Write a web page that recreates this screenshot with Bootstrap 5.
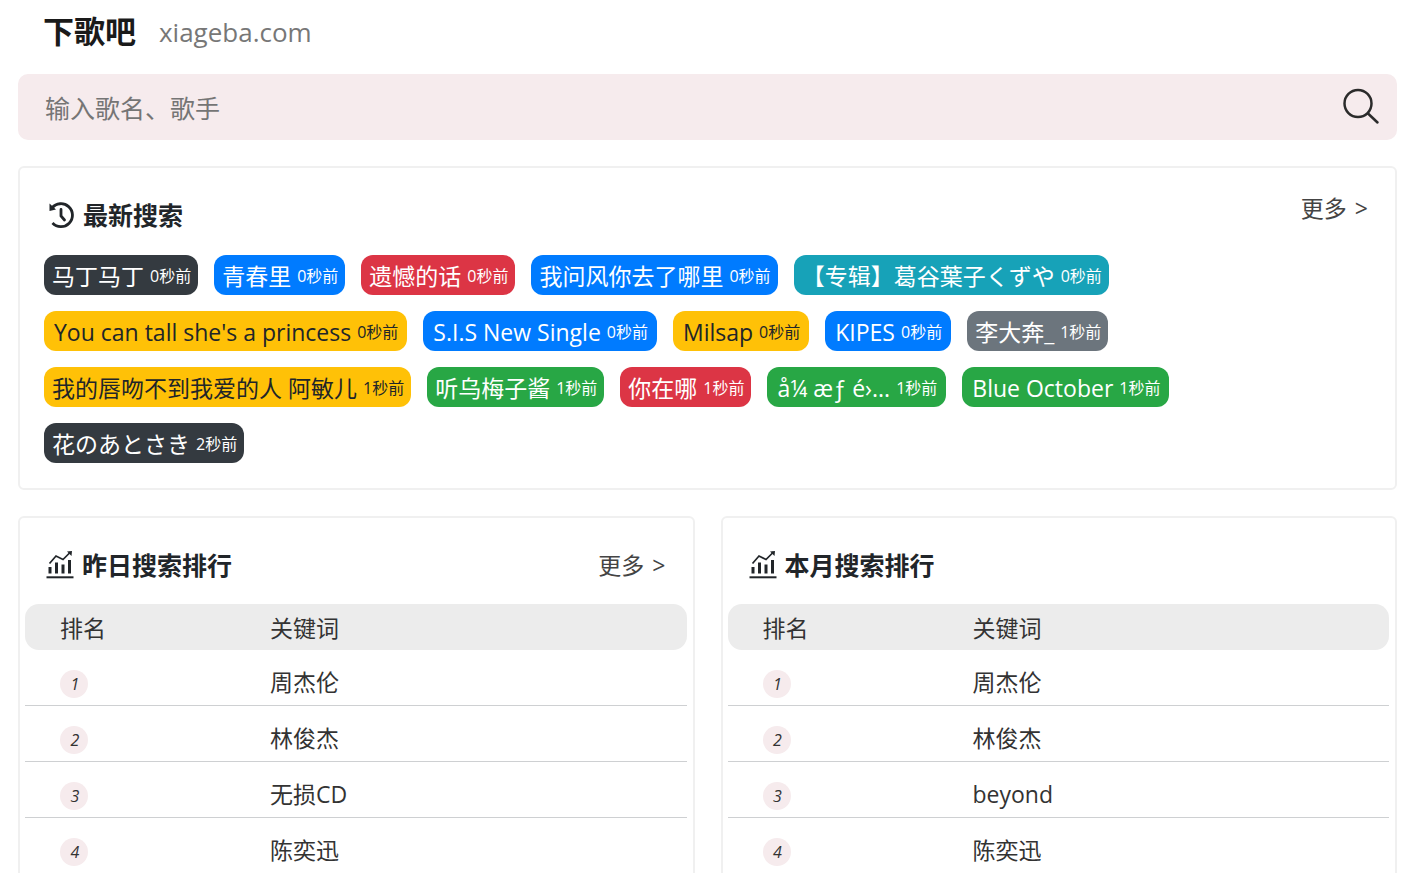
<!DOCTYPE html>
<html lang="zh-CN">
<head>
<meta charset="utf-8">
<meta name="viewport" content="width=device-width, initial-scale=1">
<title>下歌吧</title>
<link href="https://cdn.jsdelivr.net/npm/bootstrap@5.3.0/dist/css/bootstrap.min.css" rel="stylesheet">
<style>
body { font-family: "Open Sans", "Noto Sans CJK SC", sans-serif; color: #212529; background: #fff; }
.page { padding: 0 14px 0 18px; }
.brand-row { height: 74px; padding: 0 25px 12px; gap: 23px; }
.brand-name { font-size: 31px; line-height: 40px; color: #1a1a1a; }
.brand-domain { font-size: 26px; line-height: 40px; padding-top: 2px; color: #777; }
.search-box { background: #f6ebed; border-radius: 10px; height: 66px; margin-bottom: 26px; padding: 0 17px 0 27px; }
.search-box input { font-size: 25px; line-height: 40px; padding: 2px 0 0; color: #333; }
.search-box input::placeholder { color: #757575; opacity: 1; }
.panel { border: 2px solid #f0f0f0; border-radius: 6px; }
.recent { padding: 23px 24px 25px; margin-bottom: 26px; }
.panel-title { font-size: 25px; line-height: 48px; gap: 8px; }
.more { font-size: 23px; line-height: 34px; gap: 8px; color: #444; }
.recent .more { padding-right: 3px; }
.tags { gap: 16px; padding-top: 16px; }
.tag { height: 40px; border-radius: 12px; padding: 1px 7px 0 8px; gap: 6px; font-size: 23px; line-height: 40px; white-space: nowrap; }
.tag-latin { padding: 1px 9px 0 10px; }
.tag span { font-size: 16px; }
.t-dark { background: #343a40; color: #fff; }
.t-blue { background: #007bff; color: #fff; }
.t-red { background: #dc3545; color: #fff; }
.t-teal { background: #17a2b8; color: #fff; }
.t-gold { background: #ffc107; color: #212529; }
.t-gray { background: #6c757d; color: #fff; }
.t-green { background: #28a745; color: #fff; }
.ranks { gap: 26px; }
.rank-card { flex: 1 1 0; padding: 23px 6px 23px 5px; }
.rank-head { padding: 0 21px; margin-bottom: 15px; }
.rank-table { width: 100%; border-collapse: separate; border-spacing: 0; font-size: 23px; line-height: 30px; color: #333; }
.rank-table th { background: #ececec; height: 46px; padding-top: 2px; font-weight: 400; }
.rank-table th:first-child { border-radius: 14px 0 0 14px; width: 244px; }
.rank-table th:last-child { border-radius: 0 14px 14px 0; }
.rank-table th:first-child, .rank-table td:first-child { padding-left: 35px; }
.rank-table td { height: 56px; padding-top: 9px; border-bottom: 1px solid #ced0d2; }
.num { width: 28px; height: 28px; border-radius: 50%; background: #f6ebed; font-size: 16px; font-style: italic; margin-top: 4px; padding-left: 2px; }
</style>
</head>
<body>
<svg class="d-none" xmlns="http://www.w3.org/2000/svg">
  <symbol id="chart" viewBox="0 0 28 28">
    <g fill="none" stroke="currentColor">
      <path d="M.5 26.300h27" stroke-width="2"/>
      <path d="M4 16v6.500M10.500 11.500v11M17 13.500v9M23.500 9v13.500" stroke-width="3"/>
      <path d="M3.500 12.500L10 5l7 3.500L24.500 1" stroke-width="1.700"/>
    </g>
    <path d="M21 .5L26 0L25.500 5z" fill="currentColor"/>
  </symbol>
</svg>
<div class="page vh-100 overflow-hidden">
  <header class="brand-row d-flex align-items-center">
    <h1 class="brand-name fw-bold m-0">下歌吧</h1>
    <span class="brand-domain">xiageba.com</span>
  </header>
  <form class="search-box d-flex align-items-center">
    <input class="flex-grow-1 border-0 bg-transparent" type="text" placeholder="输入歌名、歌手" aria-label="输入歌名、歌手">
    <button class="btn border-0 p-0 d-flex" type="button" aria-label="搜索">
      <svg width="38" height="38" viewBox="0 0 38 38" fill="none" stroke="#2b2b2b" stroke-width="2.500" stroke-linecap="round"><circle cx="16" cy="15.500" r="13.500"/><path d="M26 25.500l9.500 9"/></svg>
    </button>
  </form>

  <section class="panel recent">
    <div class="d-flex justify-content-between align-items-start">
      <h2 class="panel-title d-flex align-items-center fw-bold m-0 ps-1">
        <svg width="27" height="28" viewBox="0 0 27 28" fill="none" stroke="currentColor" stroke-width="2.800"><path d="M4 7A11.500 11.500 0 1 1 4.500 22"/><path d="M13 8.500v6.500l3.500 4" stroke-linecap="round"/><path d="M1.500 2.500v7.500l6.500-1.500z" fill="currentColor" stroke="none"/></svg>
        最新搜索
      </h2>
      <a href="#" class="more d-flex text-decoration-none">更多 <span>&gt;</span></a>
    </div>
    <div class="tags d-flex flex-wrap">
      <a href="#" class="tag t-dark d-flex text-decoration-none">马丁马丁<span>0秒前</span></a>
      <a href="#" class="tag t-blue d-flex text-decoration-none">青春里<span>0秒前</span></a>
      <a href="#" class="tag t-red d-flex text-decoration-none">遗憾的话<span>0秒前</span></a>
      <a href="#" class="tag t-blue d-flex text-decoration-none">我问风你去了哪里<span>0秒前</span></a>
      <a href="#" class="tag t-teal d-flex text-decoration-none">【专辑】葛谷葉子くずや<span>0秒前</span></a>
      <a href="#" class="tag tag-latin t-gold d-flex text-decoration-none">You can tall she's a princess<span>0秒前</span></a>
      <a href="#" class="tag tag-latin t-blue d-flex text-decoration-none">S.I.S New Single<span>0秒前</span></a>
      <a href="#" class="tag tag-latin t-gold d-flex text-decoration-none">Milsap<span>0秒前</span></a>
      <a href="#" class="tag tag-latin t-blue d-flex text-decoration-none">KIPES<span>0秒前</span></a>
      <a href="#" class="tag t-gray d-flex text-decoration-none">李大奔_<span>1秒前</span></a>
      <a href="#" class="tag t-gold d-flex text-decoration-none">我的唇吻不到我爱的人 阿敏儿<span>1秒前</span></a>
      <a href="#" class="tag t-green d-flex text-decoration-none">听乌梅子酱<span>1秒前</span></a>
      <a href="#" class="tag t-red d-flex text-decoration-none">你在哪<span>1秒前</span></a>
      <a href="#" class="tag tag-latin t-green d-flex text-decoration-none">å¼ æƒ é›...<span>1秒前</span></a>
      <a href="#" class="tag tag-latin t-green d-flex text-decoration-none">Blue October<span>1秒前</span></a>
      <a href="#" class="tag t-dark d-flex text-decoration-none">花のあとさき<span>2秒前</span></a>
    </div>
  </section>

  <div class="ranks d-flex">
    <section class="panel rank-card">
      <div class="rank-head d-flex justify-content-between align-items-center">
        <h2 class="panel-title d-flex align-items-center fw-bold m-0"><svg width="28" height="28"><use href="#chart"/></svg>昨日搜索排行</h2>
        <a href="#" class="more d-flex text-decoration-none">更多 <span>&gt;</span></a>
      </div>
      <table class="rank-table">
        <thead><tr><th>排名</th><th>关键词</th></tr></thead>
        <tbody>
          <tr><td><span class="num d-flex align-items-center justify-content-center">1</span></td><td>周杰伦</td></tr>
          <tr><td><span class="num d-flex align-items-center justify-content-center">2</span></td><td>林俊杰</td></tr>
          <tr><td><span class="num d-flex align-items-center justify-content-center">3</span></td><td>无损CD</td></tr>
          <tr><td><span class="num d-flex align-items-center justify-content-center">4</span></td><td>陈奕迅</td></tr>
        </tbody>
      </table>
    </section>
    <section class="panel rank-card">
      <div class="rank-head d-flex justify-content-between align-items-center">
        <h2 class="panel-title d-flex align-items-center fw-bold m-0"><svg width="28" height="28"><use href="#chart"/></svg>本月搜索排行</h2>
      </div>
      <table class="rank-table">
        <thead><tr><th>排名</th><th>关键词</th></tr></thead>
        <tbody>
          <tr><td><span class="num d-flex align-items-center justify-content-center">1</span></td><td>周杰伦</td></tr>
          <tr><td><span class="num d-flex align-items-center justify-content-center">2</span></td><td>林俊杰</td></tr>
          <tr><td><span class="num d-flex align-items-center justify-content-center">3</span></td><td>beyond</td></tr>
          <tr><td><span class="num d-flex align-items-center justify-content-center">4</span></td><td>陈奕迅</td></tr>
        </tbody>
      </table>
    </section>
  </div>
</div>
<script src="https://cdn.jsdelivr.net/npm/bootstrap@5.3.0/dist/js/bootstrap.bundle.min.js"></script>
</body>
</html>
